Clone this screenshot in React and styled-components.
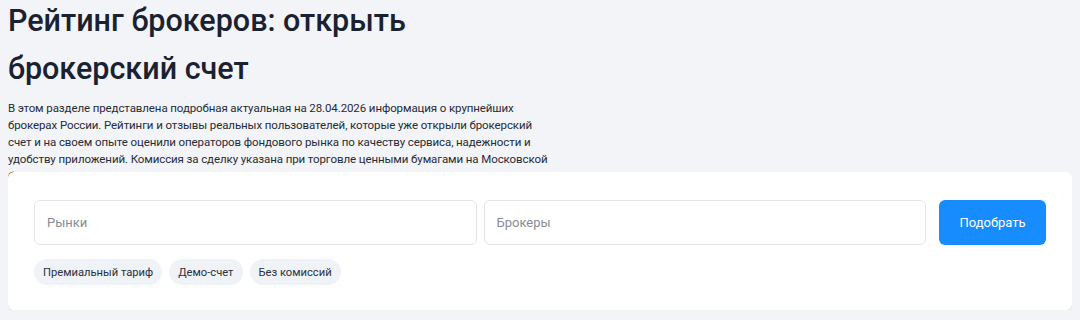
import styled, { createGlobalStyle } from "styled-components"

const Global = createGlobalStyle`
    body {
        margin: 0 8px 8px;
        background: #f3f4f8;
        font-family: Roboto, "Noto Sans", sans-serif;
        color: #1b2232;
    }
`

const Title = styled.h1`
    margin: -3px 0 0;
    font-size: 30.5px;
    line-height: 48px;
    font-weight: 500;
    color: #1a2131;
    max-width: 500px;
`

const Desc = styled.p`
    margin: 7px 0 0;
    max-width: 548px;
    height: 72px;
    font-size: 11.5px;
    letter-spacing: -0.1px;
    line-height: 17px;
    color: #262b36;
`

const Card = styled.div`
    position: relative;
    background: #fff;
    border-radius: 6px;
    box-shadow: 0 1px 2px rgba(20, 30, 50, 0.1);
    padding: 28px 26px 25px;
`

const Row = styled.div`
    display: grid;
    grid-template-columns: 1fr 1fr auto;
    gap: 7px;
`

const Field = styled.input`
    height: 45px;
    box-sizing: border-box;
    border: 1px solid #e2e4ea;
    border-radius: 6px;
    padding: 0 12px;
    font-family: Roboto, sans-serif;
    font-size: 13px;
    color: #1b2232;
    background: #fff;
    outline: none;
    &::placeholder {
        color: #878c97;
    }
`

const Button = styled.button`
    margin-left: 6px;
    width: 107px;
    height: 45px;
    border: none;
    border-radius: 6px;
    background: #168cff;
    color: #fff;
    font-family: Roboto, sans-serif;
    font-size: 13px;
    cursor: pointer;
`

const Chips = styled.div`
    display: flex;
    gap: 7px;
    margin-top: 14px;
`

const Chip = styled.span`
    display: inline-flex;
    align-items: center;
    height: 26px;
    padding: 0 9px;
    border-radius: 13px;
    background: #eff2f7;
    font-size: 11.2px;
    color: #2a303d;
`

const App = () => {
  return (
    <>
      <Global />
      <Title>Рейтинг брокеров: открыть брокерский счет</Title>
      <Desc>
        В этом разделе представлена подробная актуальная на 28.04.2026 информация о крупнейших
        брокерах России. Рейтинги и отзывы реальных пользователей, которые уже открыли брокерский
        счет и на своем опыте оценили операторов фондового рынка по качеству сервиса, надежности и
        удобству приложений. Комиссия за сделку указана при торговле ценными бумагами на Московской
        бирже.
      </Desc>
      <Card>
        <Row>
          <Field placeholder="Рынки" />
          <Field placeholder="Брокеры" />
          <Button>Подобрать</Button>
        </Row>
        <Chips>
          <Chip>Премиальный тариф</Chip>
          <Chip>Демо-счет</Chip>
          <Chip>Без комиссий</Chip>
        </Chips>
      </Card>
    </>
  )
}

export default App
